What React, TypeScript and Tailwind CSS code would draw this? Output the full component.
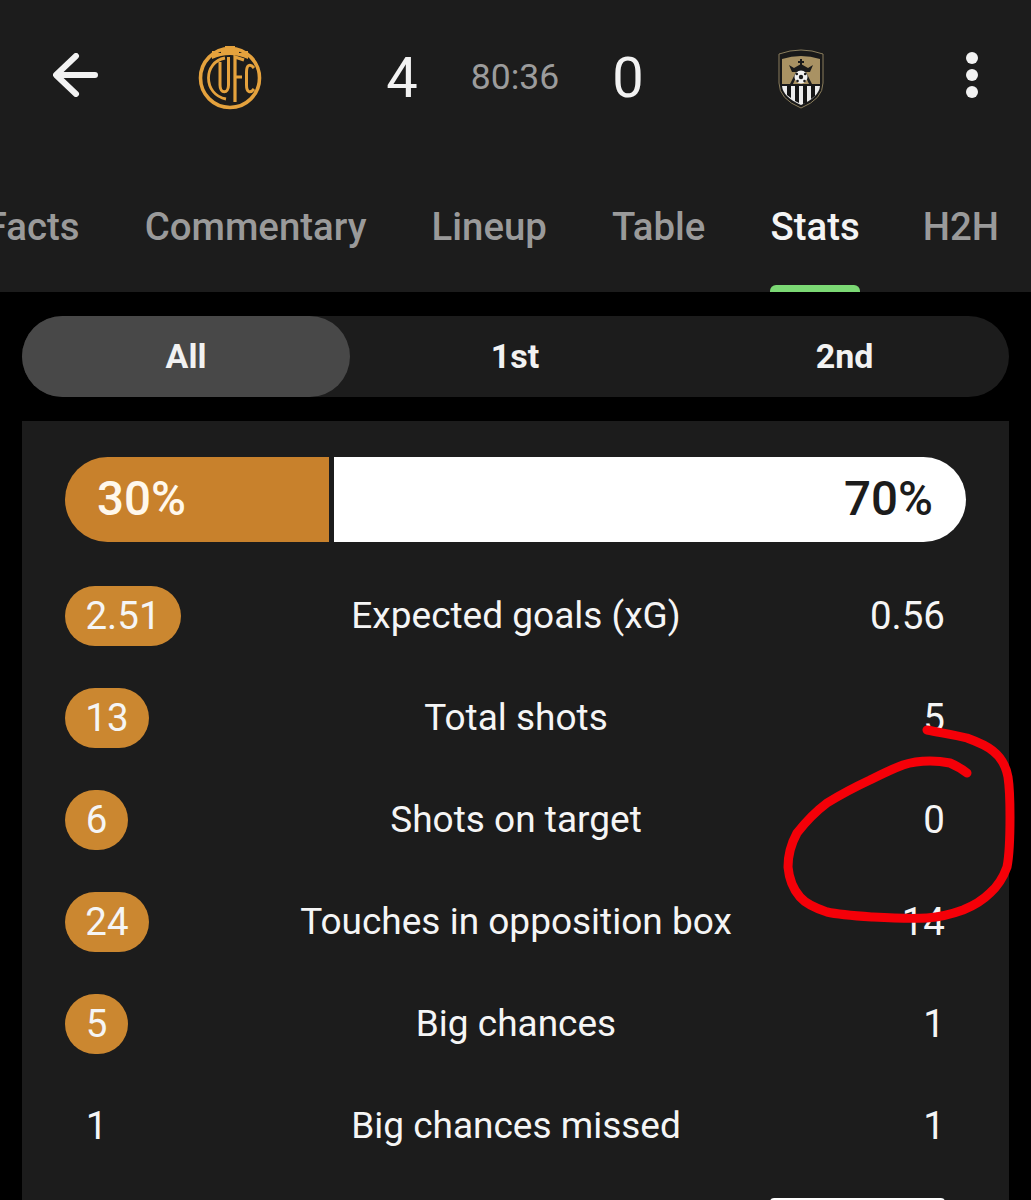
const rows = [
  { l: "2.51", label: "Expected goals (xG)", r: "0.56", pill: "w-[116px] bg-[#cb8730]" },
  { l: "13", label: "Total shots", r: "5", pill: "w-[84px] bg-[#cb8730]" },
  { l: "6", label: "Shots on target", r: "0", pill: "w-[63px] bg-[#cb8730]" },
  { l: "24", label: "Touches in opposition box", r: "14", pill: "w-[84px] bg-[#cb8730]" },
  { l: "5", label: "Big chances", r: "1", pill: "w-[63px] bg-[#cb8730]" },
  { l: "1", label: "Big chances missed", r: "1", pill: "w-[63px]" },
];

function HomeLogo() {
  return (
    <svg width="66" height="66" viewBox="0 0 66 66" fill="none" stroke="#e5a23d">
      <path d="M15 15 L15 7 L20 7 L20 9 L24 9 L24 5 L28 5 L28 2 L38 2 L38 5 L42 5 L42 9 L46 9 L46 7 L51 7 L51 15 Q33 7 15 15 Z" fill="#e5a23d" stroke="none" />
      <circle cx="33" cy="34" r="29.5" strokeWidth="3.6" />
      <path d="M28 14 C17 16 11.5 25 11.5 34 C11.5 44 18 53 29 55" strokeWidth="2.8" />
      <path d="M23 18 L23 41 C23 50 31.5 50 31.5 41 L31.5 13" strokeWidth="3" />
      <path d="M38 58 L38 13 L47 16 M38 33 L45 33" strokeWidth="3.2" />
      <path d="M57 24 C53 19 49.5 21 49.5 28 L49.5 41 C49.5 48 53 50 57 45" strokeWidth="3" />
    </svg>
  );
}

function AwayLogo() {
  return (
    <svg width="46" height="62" viewBox="0 0 46 62">
      <path d="M1 7 Q23 -1 45 7 L45 36 Q45 52 23 61 Q1 52 1 36 Z" fill="#191919" stroke="#8a7d5c" strokeWidth="1" />
      <path d="M4 12 Q23 6 42 12 L42 37 L4 37 Z" fill="#a99263" />
      <path d="M4 39 L42 39 Q41 50 23 58 Q5 50 4 39 Z" fill="#ececec" />
      <path d="M9 39 H13 V51 L9 48 Z M17 39 H21 V56 L17 54 Z M25 39 H29 V56 L25 57 Z M33 39 H37 V49 L33 52 Z" fill="#161616" />
      <path d="M11 18 L16 21 L23 17 L30 21 L35 18 L32 25 L14 25 Z M22 12 H24 V19 H22 Z M20 14 H26 V16 H20 Z M12 37 L18 25 L20 26 L15 37 Z M34 37 L28 25 L26 26 L31 37 Z" fill="#1b1b1b" />
      <circle cx="23" cy="30" r="6.5" fill="#f2f2f2" />
      <circle cx="23" cy="30" r="2.2" fill="#1b1b1b" />
      <circle cx="18.8" cy="27" r="1.3" fill="#1b1b1b" />
      <circle cx="27.2" cy="27" r="1.3" fill="#1b1b1b" />
      <circle cx="19.5" cy="34" r="1.3" fill="#1b1b1b" />
      <circle cx="26.5" cy="34" r="1.3" fill="#1b1b1b" />
    </svg>
  );
}

export default function App() {
  return (
    <div className="relative h-[1200px] w-[1031px] overflow-hidden bg-black font-['Roboto',sans-serif] text-white">
      <header className="h-[292px] bg-[#1c1c1c]">
        <div className="flex h-[156px] items-center">
          <div className="flex w-[151px] justify-center pb-[7px]">
            <svg width="46" height="44" viewBox="0 0 46 44" fill="none" stroke="#f2f2f2" strokeWidth="6" strokeLinecap="round" strokeLinejoin="round">
              <path d="M42 22 H4 M23 3 L3 22 L23 41" />
            </svg>
          </div>
          <div className="flex w-[158px] justify-center pb-[2px]"><HomeLogo /></div>
          <div className="w-[186px] text-center text-[56px] leading-[66px] text-[#f2f2f2]">4</div>
          <div className="flex w-[40px] justify-center whitespace-nowrap text-[35.5px] text-[#9c9c9c]">80:36</div>
          <div className="w-[186px] text-center text-[56px] leading-[66px] text-[#f2f2f2]">0</div>
          <div className="flex w-[160px] justify-center"><AwayLogo /></div>
          <div className="flex w-[150px] flex-col items-center gap-[5px] pb-[6px] pl-[31px]">
            <span className="h-[12px] w-[12px] rounded-full bg-[#f2f2f2]" />
            <span className="h-[12px] w-[12px] rounded-full bg-[#f2f2f2]" />
            <span className="h-[12px] w-[12px] rounded-full bg-[#f2f2f2]" />
          </div>
        </div>
        <nav className="flex h-[136px] justify-end gap-[65px] overflow-hidden pr-[32px] text-[38.4px] font-medium text-[#9a9a9a]">
          <span className="pt-[48px] leading-[46px]">Facts</span>
          <span className="pt-[48px] leading-[46px]">Commentary</span>
          <span className="pt-[48px] leading-[46px]">Lineup</span>
          <span className="pt-[48px] leading-[46px]">Table</span>
          <span className="relative pt-[48px] leading-[46px] text-[#f4f4f4]">
            Stats
            <span className="absolute bottom-0 left-0 right-0 h-[7px] rounded-t-[6px] bg-[#7bd874]" />
          </span>
          <span className="ml-[-2px] pt-[48px] leading-[46px]">H2H</span>
        </nav>
      </header>

      <main className="px-[22px] pt-[24px]">
        <div className="flex h-[81px] items-stretch rounded-full bg-[#1c1c1c] text-[34px] font-bold text-[#f2f2f2]">
          <div className="flex w-[328px] items-center justify-center rounded-full bg-[#484848]">All</div>
          <div className="flex w-[330px] items-center justify-center">1st</div>
          <div className="flex w-[329px] items-center justify-center">2nd</div>
        </div>

        <section className="mt-[24px] h-[800px] bg-[#1c1c1c] px-[43px] pt-[36px]">
          <div className="flex h-[85px] w-[901px] gap-[5px] text-[47.5px] font-medium">
            <div className="flex w-[264px] items-center rounded-l-full bg-[#c8812c] pl-[32px] text-[#fff8ec]">30%</div>
            <div className="flex flex-1 items-center justify-end rounded-r-full bg-white pr-[33px] text-[#1c1c1c]">70%</div>
          </div>
          <div className="mt-[23px] flex flex-col">
            {rows.map((row) => (
              <div key={row.label} className="relative flex h-[102px] w-[880px] items-center justify-between text-[38.5px] text-[#f5f5f5]">
                <span className={`flex h-[60px] items-center justify-center rounded-full ${row.pill}`}>{row.l}</span>
                <span className="absolute left-0 right-[-22px] text-center text-[37px]">{row.label}</span>
                <span>{row.r}</span>
              </div>
            ))}
          </div>
          <div className="ml-[705px] mt-[21px] h-[4px] w-[175px] rounded-t-[10px] bg-white" />
        </section>
      </main>

      <svg className="absolute left-[760px] top-[700px]" width="271" height="240" viewBox="0 0 271 240" fill="none" stroke="#f50008" strokeWidth="9" strokeLinecap="round" strokeLinejoin="round">
        <path d="M167 30 C182 33 195 35 207 38 C218 42 226 45 233 51 C242 58 246 66 248 77 C250 90 250 105 250 117 C250 135 250 152 247 167 C243 178 238 186 230 193 C222 201 213 206 203 210 C192 214 180 217 167 218 C150 219 130 218 113 217 C97 216 80 215 67 212 C55 208 46 204 40 197 C33 189 29 178 28 167 C28 155 31 144 37 133 C44 124 55 112 67 103 C80 95 95 87 110 80 C122 74 132 69 143 65 C152 62 161 61 170 61 C178 61 185 62 190 63 C197 66 202 69 207 73" />
      </svg>
    </div>
  );
}
